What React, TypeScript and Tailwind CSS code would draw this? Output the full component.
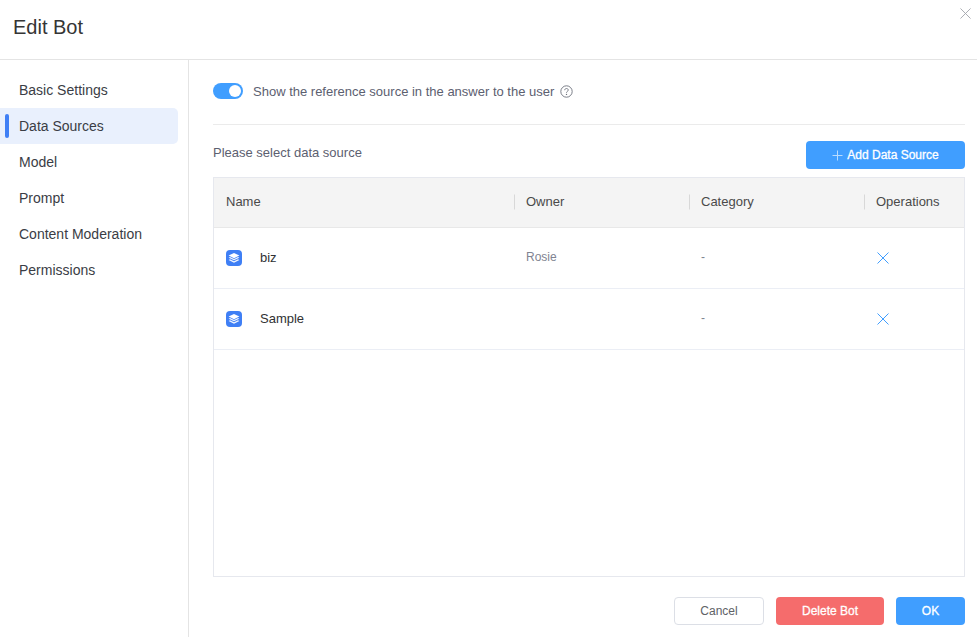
import React from "react";

const navItems = ["Basic Settings", "Data Sources", "Model", "Prompt", "Content Moderation", "Permissions"];

function StackIcon() {
  return (
    <svg width="16" height="16" viewBox="0 0 16 16" className="shrink-0">
      <rect width="16" height="16" rx="4" fill="#3f7ff5" />
      <path d="M8 3 13.4 5.6 8 8.2 2.6 5.6Z" fill="#fff" />
      <path d="M2.6 7.8 4 7.1 8 9 12 7.1 13.4 7.8 8 10.3Z" fill="#fff" opacity="0.92" />
      <path d="M2.6 10 4 9.3 8 11.2 12 9.3 13.4 10 8 12.8Z" fill="#fff" opacity="0.92" />
    </svg>
  );
}

function CloseIcon({ size, color, width = 1 }: { size: number; color: string; width?: number }) {
  return (
    <svg width={size} height={size} viewBox="0 0 12 12" fill="none">
      <path d="M0.5 0.5 11.5 11.5M11.5 0.5 0.5 11.5" stroke={color} strokeWidth={width} />
    </svg>
  );
}

function Row({ name, owner }: { name: string; owner: string }) {
  return (
    <div className="flex h-[61px] items-center border-b border-[#ebeef5] pb-px text-[13px]">
      <div className="flex w-[301px] items-center pl-3">
        <StackIcon />
        <span className="ml-[18px] text-[#303133]">{name}</span>
      </div>
      <div className="mb-[2px] w-[175px] pl-[11px] text-[12px] text-[#7f8491]">{owner}</div>
      <div className="mb-[2px] w-[175px] pl-[11px] text-[12px] text-[#7f8491]">-</div>
      <div className="flex-1 pl-[12px]">
        <CloseIcon size={12} color="#409eff" />
      </div>
    </div>
  );
}

function HeadCell({ label, className }: { label: string; className: string }) {
  return (
    <div className={className}>
      <span className="absolute -left-px top-1/2 h-[15px] w-px -translate-y-1/2 bg-[#d8d8d8]" />
      {label}
    </div>
  );
}

export default function App() {
  return (
    <div className="relative flex h-[637px] w-[977px] flex-col overflow-hidden bg-white font-['Liberation_Sans',sans-serif] text-[#303133]">
      <header className="flex h-[60px] shrink-0 items-center border-b border-[#e4e4e4] pb-[5px] pl-[13px] text-[20px] text-[#353535]">
        Edit Bot
      </header>
      <button className="absolute right-[6px] top-[8px]">
        <CloseIcon size={11} color="#a3a6ad" />
      </button>
      <div className="flex min-h-0 flex-1">
        <nav className="w-[189px] shrink-0 border-r border-[#e4e4e4] pr-[10px] pt-3">
          {navItems.map((item) => {
            const active = item === "Data Sources";
            return (
              <div
                key={item}
                className={
                  active
                    ? "relative flex h-9 items-center rounded-r-[5px] bg-[#e9f0fd] pl-[19px] text-[14px] text-[#3a3d45]"
                    : "flex h-9 items-center pl-[19px] text-[14px] text-[#3a3d45]"
                }
              >
                {active && <span className="absolute left-[5px] top-[6px] h-6 w-1 rounded-sm bg-[#3f7ff5]" />}
                {item}
              </div>
            );
          })}
        </nav>
        <main className="flex min-w-0 flex-1 flex-col pl-6 pr-3">
          <div className="flex h-[65px] shrink-0 items-center border-b border-[#ebebeb] pb-[1px]">
            <div className="mb-[1px] flex h-4 w-[30px] items-center justify-end rounded-full bg-[#409eff] pr-[2px]">
              <span className="h-3 w-3 rounded-full bg-white" />
            </div>
            <span className="ml-[10px] text-[13px] text-[#5c6070]">Show the reference source in the answer to the user</span>
            <svg width="13" height="13" viewBox="0 0 13 13" fill="none" className="ml-[6px]">
              <circle cx="6.5" cy="6.5" r="5.7" stroke="#6b6f7a" strokeWidth="0.9" />
              <path d="M4.7 5.2C4.7 4.2 5.5 3.5 6.5 3.5S8.3 4.2 8.3 5.1C8.3 6.2 6.5 6.4 6.5 7.7" stroke="#6b6f7a" strokeWidth="0.9" />
              <circle cx="6.5" cy="9.4" r="0.7" fill="#6b6f7a" />
            </svg>
          </div>
          <div className="flex h-[52px] shrink-0 items-start justify-between pt-[16px]">
            <span className="mt-[3px] text-[13px] leading-[18px] text-[#5c6070]">Please select data source</span>
            <button className="flex h-7 w-[159px] items-center justify-center rounded-[4px] bg-[#409eff] text-[12px] text-white [-webkit-text-stroke:0.3px_#fff]">
              <svg width="11" height="11" viewBox="0 0 11 11" className="mr-[4px]">
                <path d="M5.5 0.5V10.5M0.5 5.5H10.5" stroke="#b9dcff" strokeWidth="1" />
              </svg>
              Add Data Source
            </button>
          </div>
          <div className="flex h-[400px] shrink-0 flex-col border border-[#e6e8ee]">
            <div className="flex h-[50px] shrink-0 items-center border-b border-[#e8e8e8] bg-[#f4f4f4] pb-[1px] text-[13px] text-[#4a4a4a]">
              <div className="w-[301px] pl-3">Name</div>
              <HeadCell label="Owner" className="relative w-[175px] pl-[11px]" />
              <HeadCell label="Category" className="relative w-[175px] pl-[11px]" />
              <HeadCell label="Operations" className="relative flex-1 pl-[11px]" />
            </div>
            <Row name="biz" owner="Rosie" />
            <Row name="Sample" owner="" />
          </div>
          <div className="flex flex-1 items-start justify-end pt-5 text-[12px]">
            <button className="flex h-7 w-[90px] items-center justify-center rounded-[4px] border border-[#dcdfe6] text-[#606266]">
              Cancel
            </button>
            <button className="ml-3 flex h-7 w-[108px] items-center justify-center rounded-[4px] bg-[#f56c6c] text-white [-webkit-text-stroke:0.3px_#fff]">
              Delete Bot
            </button>
            <button className="ml-3 flex h-7 w-[69px] items-center justify-center rounded-[4px] bg-[#409eff] text-white [-webkit-text-stroke:0.3px_#fff]">
              OK
            </button>
          </div>
        </main>
      </div>
    </div>
  );
}
